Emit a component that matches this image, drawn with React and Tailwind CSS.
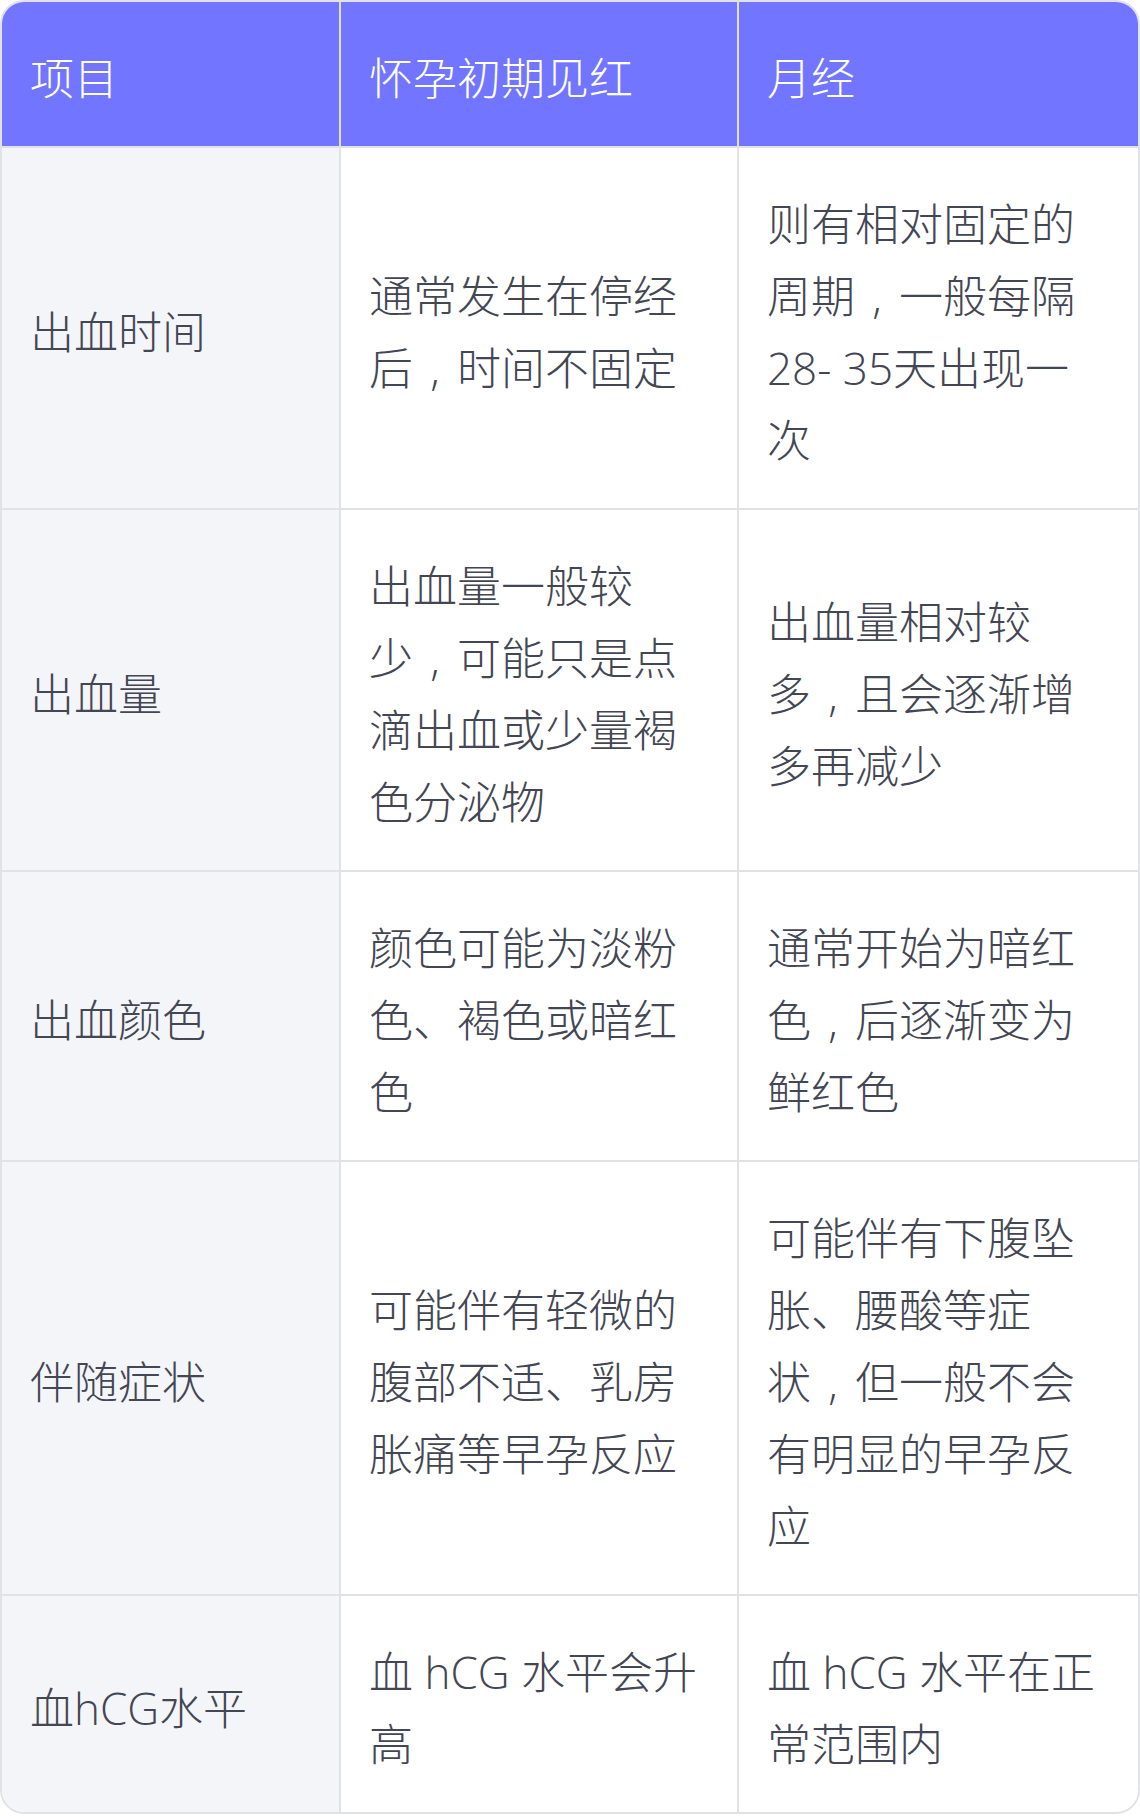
const rows = [
  {
    item: "出血时间",
    early: "通常发生在停经后，时间不固定",
    period: "则有相对固定的周期，一般每隔28- 35天出现一次",
  },
  {
    item: "出血量",
    early: "出血量一般较少，可能只是点滴出血或少量褐色分泌物",
    period: "出血量相对较多，且会逐渐增多再减少",
  },
  {
    item: "出血颜色",
    early: "颜色可能为淡粉色、褐色或暗红色",
    period: "通常开始为暗红色，后逐渐变为鲜红色",
  },
  {
    item: "伴随症状",
    early: "可能伴有轻微的腹部不适、乳房胀痛等早孕反应",
    period: "可能伴有下腹坠胀、腰酸等症状，但一般不会有明显的早孕反应",
  },
  {
    item: "血hCG水平",
    early: "血 hCG 水平会升高",
    period: "血 hCG 水平在正常范围内",
  },
];

// the full-width comma sits centred on the baseline in the design,
// and stays glued to the character before it
const Text = ({ children }) => {
  const parts = children.split("，");
  return (
    <span>
      {parts.map((p, i) => {
        if (i === parts.length - 1) return <span key={i}>{p}</span>;
        return (
          <span key={i}>
            {p.slice(0, -1)}
            <span className="whitespace-nowrap">
              {p.slice(-1)}
              <span className="inline-block w-[1em] text-center">,</span>
            </span>
          </span>
        );
      })}
    </span>
  );
};

const cell = "flex items-center px-[28px] pt-[40px] pb-[32px] text-[44px] leading-[72px] font-light";

const App = () => {
  return (
    <div
      className="w-[1140px] bg-white"
      style={{ fontFamily: '"Open Sans", "Noto Sans CJK SC", sans-serif' }}
    >
      <div className="border-2 border-[#e1e2e7] rounded-[24px] overflow-hidden">
        <div className="grid grid-cols-[339px_398px_1fr]">
          <div className={`${cell} bg-[#7175ff] text-white border-r-2 border-b-2 border-[#e1e2e7]`}>项目</div>
          <div className={`${cell} bg-[#7175ff] text-white border-r-2 border-b-2 border-[#e1e2e7]`}>怀孕初期见红</div>
          <div className={`${cell} bg-[#7175ff] text-white border-b-2 border-[#e1e2e7]`}>月经</div>

          {rows.map((row, i) => {
            const last = i === rows.length - 1;
            const bb = last ? "" : "border-b-2";
            return [
              <div
                key={row.item + "a"}
                className={`${cell} bg-[#f4f5f9] text-[#434653] border-r-2 ${bb} border-[#e1e2e7]`}
              >
                {row.item}
              </div>,
              <div
                key={row.item + "b"}
                className={`${cell} bg-white text-[#434653] border-r-2 ${bb} border-[#e1e2e7]`}
              >
                <Text>{row.early}</Text>
              </div>,
              <div
                key={row.item + "c"}
                className={`${cell} bg-white text-[#434653] ${bb} border-[#e1e2e7]`}
              >
                <Text>{row.period}</Text>
              </div>,
            ];
          })}
        </div>
      </div>
    </div>
  );
};

export default App;
